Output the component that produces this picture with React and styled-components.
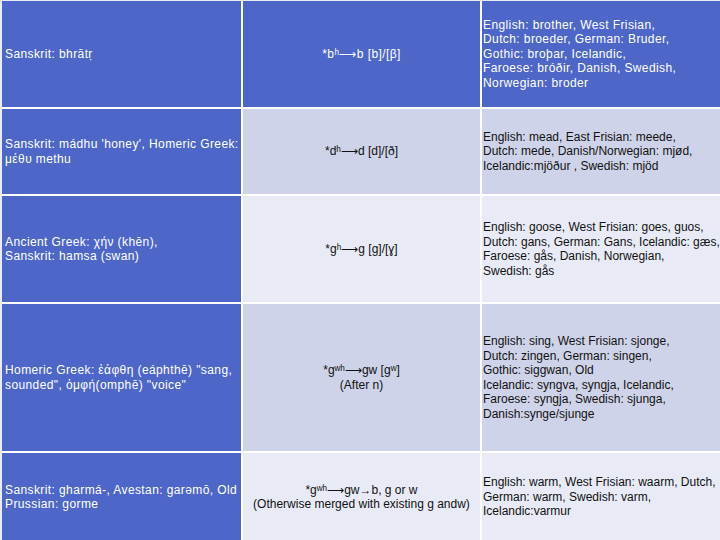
import React from "react";
import styled, { createGlobalStyle } from "styled-components";

const GlobalStyle = createGlobalStyle`
  html, body {
    margin: 0;
    padding: 0;
    background: #e9ecf6;
  }
  body {
    font-family: "Liberation Sans", Arial, sans-serif;
  }
`;

const Page = styled.div`
  width: 720px;
  height: 540px;
  overflow: hidden;
  padding: 1px 0 0 2px;
  box-sizing: border-box;
`;

const Table = styled.div`
  display: grid;
  grid-template-columns: 239px 237px 240px;
  grid-template-rows: 106px 85px 106px 147px 88px;
  gap: 2px;
  background: #ffffff;
`;

const Cell = styled.div`
  display: flex;
  align-items: center;
  justify-content: ${(p) => (p.center ? "center" : "flex-start")};
  text-align: ${(p) => (p.center ? "center" : "left")};
  padding: 0 ${(p) => (p.center ? "0" : p.inset)};
  background: ${(p) =>
    p.tone === "dark" ? "#4e66c8" : p.tone === "mid" ? "#cfd3e9" : "#e8ebf5"};
  color: ${(p) => (p.tone === "dark" ? "#ffffff" : "#111111")};
  font-size: 12px;
  line-height: 14.5px;
  letter-spacing: ${(p) => (p.tone === "dark" ? "0.4px" : "0")};
  white-space: nowrap;
  overflow: hidden;
`;

const rows = [
  {
    tone: "dark",
    src: ["Sanskrit: bhrātṛ"],
    change: ["*bʰ⟶b [b]/[β]"],
    cognates: [
      "English: brother, West Frisian,",
      "Dutch: broeder, German: Bruder,",
      "Gothic: broþar, Icelandic,",
      "Faroese: bróðir, Danish, Swedish,",
      "Norwegian: broder",
    ],
  },
  {
    tone: "mid",
    src: ["Sanskrit: mádhu 'honey', Homeric Greek:", "μέθυ methu"],
    change: ["*dʰ⟶d [d]/[ð]"],
    cognates: [
      "English: mead, East Frisian: meede,",
      "Dutch: mede, Danish/Norwegian: mjød,",
      "Icelandic:mjöður , Swedish: mjöd",
    ],
  },
  {
    tone: "light",
    src: ["Ancient Greek: χήν (khēn),", "Sanskrit: hamsa (swan)"],
    change: ["*gʰ⟶g [g]/[ɣ]"],
    cognates: [
      "English: goose, West Frisian: goes, guos,",
      "Dutch: gans, German: Gans, Icelandic: gæs,",
      "Faroese: gås, Danish, Norwegian,",
      "Swedish: gås",
    ],
  },
  {
    tone: "mid",
    src: [
      "Homeric Greek: ἐάφθη (eáphthē) \"sang,",
      "sounded\", ὀμφή(omphē) \"voice\"",
    ],
    change: ["*gʷʰ⟶gw [gʷ]", "(After n)"],
    cognates: [
      "English: sing, West Frisian: sjonge,",
      "Dutch: zingen, German: singen,",
      "Gothic: siggwan, Old",
      "Icelandic: syngva, syngja, Icelandic,",
      "Faroese: syngja, Swedish: sjunga,",
      "Danish:synge/sjunge",
    ],
  },
  {
    tone: "light",
    src: ["Sanskrit: gharmá-, Avestan: garəmō, Old", "Prussian: gorme"],
    change: ["*gʷʰ⟶gw→b, g or w", "(Otherwise merged with existing g andw)"],
    cognates: [
      "English: warm, West Frisian: waarm, Dutch,",
      "German: warm, Swedish: varm,",
      "Icelandic:varmur",
    ],
  },
];

const Lines = ({ lines }) => (
  <div>
    {lines.map((l, i) => (
      <div key={i}>{l}</div>
    ))}
  </div>
);

const App = () => (
  <>
    <GlobalStyle />
    <Page>
      <Table>
        {rows.map((r, i) => (
          <React.Fragment key={i}>
            <Cell tone="dark" inset="3px">
              <Lines lines={r.src} />
            </Cell>
            <Cell tone={r.tone} center>
              <Lines lines={r.change} />
            </Cell>
            <Cell tone={r.tone} inset="1px">
              <Lines lines={r.cognates} />
            </Cell>
          </React.Fragment>
        ))}
      </Table>
    </Page>
  </>
);

export default App;
